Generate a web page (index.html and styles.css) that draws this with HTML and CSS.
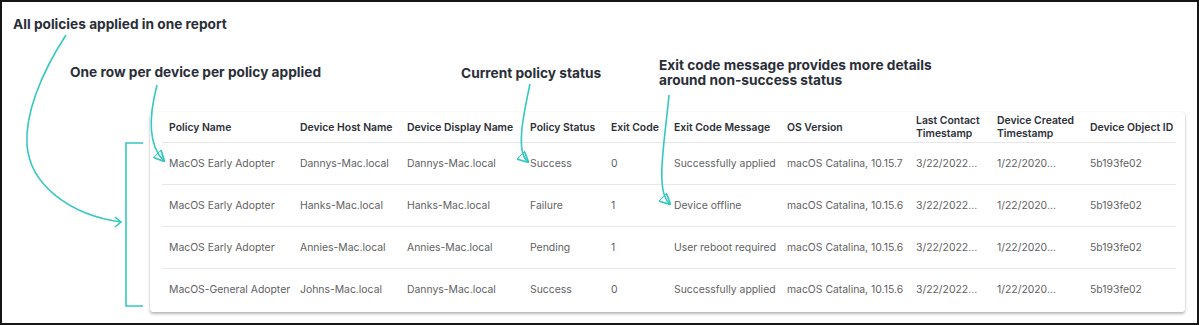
FILE: index.html
```html
<!DOCTYPE html>
<html lang="en">
<head>
    <meta charset="UTF-8">
    <title>Policy Report</title>
    <link rel="stylesheet" href="styles.css">
</head>
<body>
    <div class="frame">
        <p class="note note-all">All policies applied in one report</p>
        <p class="note note-row">One row per device per policy applied</p>
        <p class="note note-status">Current policy status</p>
        <p class="note note-exit">Exit code message provides more details<br>around non-success status</p>

        <svg class="arrows" width="1199" height="325" viewBox="0 0 1199 325">
            <defs>
                <marker id="head" viewBox="0 0 10 10" refX="8" refY="5" markerWidth="7" markerHeight="7" orient="auto">
                    <path d="M0,0 L10,5 L0,10 z" fill="#35c7c0"/>
                </marker>
            </defs>
            <path d="M66,35 C40,75 25,115 27,145 C30,185 70,215 121,222" />
            <path d="M115,217 L121,222 L115,227" />
            <path d="M157,85 C151,108 146,142 163,160" marker-end="url(#head)"/>
            <path d="M530,84 C525,108 515,150 527,161" marker-end="url(#head)"/>
            <path d="M669,95 C665,140 655,190 669,203" marker-end="url(#head)"/>
            <path d="M143,143 H126 V306 H143" />
        </svg>

        <div class="card">
            <table class="report">
                <thead>
                    <tr>
                        <th class="c-policy">Policy Name</th>
                        <th class="c-host">Device Host Name</th>
                        <th class="c-display">Device Display Name</th>
                        <th class="c-status">Policy Status</th>
                        <th class="c-code">Exit Code</th>
                        <th class="c-msg">Exit Code Message</th>
                        <th class="c-os">OS Version</th>
                        <th class="c-contact">Last Contact<br>Timestamp</th>
                        <th class="c-created">Device Created<br>Timestamp</th>
                        <th>Device Object ID</th>
                    </tr>
                </thead>
                <tbody>
                    <tr>
                        <td>MacOS Early Adopter</td>
                        <td>Dannys-Mac.local</td>
                        <td>Dannys-Mac.local</td>
                        <td>Success</td>
                        <td>0</td>
                        <td>Successfully applied</td>
                        <td>macOS Catalina, 10.15.7</td>
                        <td>3/22/2022...</td>
                        <td>1/22/2020...</td>
                        <td>5b193fe02</td>
                    </tr>
                    <tr>
                        <td>MacOS Early Adopter</td>
                        <td>Hanks-Mac.local</td>
                        <td>Hanks-Mac.local</td>
                        <td>Failure</td>
                        <td>1</td>
                        <td>Device offline</td>
                        <td>macOS Catalina, 10.15.6</td>
                        <td>3/22/2022...</td>
                        <td>1/22/2020...</td>
                        <td>5b193fe02</td>
                    </tr>
                    <tr>
                        <td>MacOS Early Adopter</td>
                        <td>Annies-Mac.local</td>
                        <td>Annies-Mac.local</td>
                        <td>Pending</td>
                        <td>1</td>
                        <td>User reboot required</td>
                        <td>macOS Catalina, 10.15.6</td>
                        <td>3/22/2022...</td>
                        <td>1/22/2020...</td>
                        <td>5b193fe02</td>
                    </tr>
                    <tr>
                        <td>MacOS-General Adopter</td>
                        <td>Johns-Mac.local</td>
                        <td>Dannys-Mac.local</td>
                        <td>Success</td>
                        <td>0</td>
                        <td>Successfully applied</td>
                        <td>macOS Catalina, 10.15.6</td>
                        <td>3/22/2022...</td>
                        <td>1/22/2020...</td>
                        <td>5b193fe02</td>
                    </tr>
                </tbody>
            </table>
        </div>
    </div>
</body>
</html>
```

FILE: styles.css
```css
body {
    margin: 0;
    background-color: #fff;
    font-family: Inter, "Liberation Sans", sans-serif;
}

.frame {
    position: relative;
    width: 1199px;
    height: 325px;
    box-sizing: border-box;
    border: 2px solid #151515;
    padding: 110px 0 0 148px;
}

/* annotations */
.note {
    position: absolute;
    margin: 0;
    font-size: 13.7px;
    font-weight: 700;
    line-height: 15px;
    color: #2a2e38;
}

.note-all {
    left: 11px;
    top: 15px;
}

.note-row {
    left: 68px;
    top: 63px;
}

.note-status {
    left: 459px;
    top: 64px;
}

.note-exit {
    left: 657px;
    top: 56px;
}

.arrows {
    position: absolute;
    left: -2px;
    top: -2px;
    pointer-events: none;
}

.arrows path {
    fill: none;
    stroke: #35c7c0;
    stroke-width: 1.6;
}

/* report card */
.card {
    width: 1035px;
    height: 200px;
    background-color: #fff;
    border-radius: 3px;
    box-shadow: 0 2px 3px rgba(0, 0, 0, 0.28), 0 0 1px rgba(0, 0, 0, 0.18);
}

.report {
    margin-left: 12px;
    width: 1014px;
    border-collapse: collapse;
    table-layout: fixed;
    font-size: 10.4px;
}

.report th,
.report td {
    padding: 0 0 0 7px;
    text-align: left;
    white-space: nowrap;
}

.report th {
    height: 30px;
    font-weight: 600;
    line-height: 13px;
    color: #2d3038;
    border-bottom: 1px solid #e6e6e6;
}

.report td {
    height: 41px;
    color: #5f5f63;
    border-bottom: 1px solid #e8e8e8;
}

.report tbody tr:last-child td {
    border-bottom: none;
}

.c-policy { width: 124px; }
.c-host { width: 100px; }
.c-display { width: 116px; }
.c-status { width: 74px; }
.c-code { width: 56px; }
.c-msg { width: 106px; }
.c-os { width: 122px; }
.c-contact { width: 74px; }
.c-created { width: 86px; }
```
